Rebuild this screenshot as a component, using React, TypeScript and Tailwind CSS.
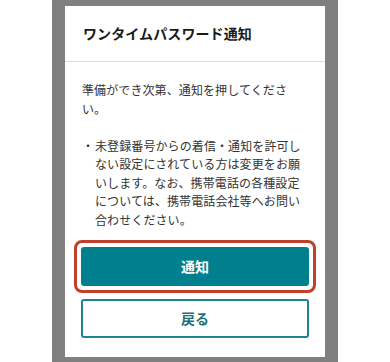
const font = {
  fontFamily: '"Noto Sans CJK JP", "Noto Sans", sans-serif',
};

export default function App() {
  return (
    <div className="flex h-[362px] w-[390px] justify-center overflow-hidden bg-white" style={font}>
      <div className="flex h-full w-[286px] flex-col bg-[#808080] px-[13px] pt-[6px]">
        <div className="flex h-[351px] flex-col bg-white">
          <div className="flex h-[56px] shrink-0 items-center border-b border-[#dcdcdc] px-[18px]">
            <h1 className="text-[14px] font-bold tracking-[0.1px] text-[#1a1a1a]">
              ワンタイムパスワード通知
            </h1>
          </div>
          <div className="px-[17px] pt-[19px] text-[12px] leading-[18.5px] tracking-[0.1px] text-[#333]">
            <p>準備ができ次第、通知を押してください。</p>
            <ul className="mt-[18.5px]">
              <li className="flex">
                <span className="w-[13px] shrink-0">・</span>
                <span>
                  未登録番号からの着信・通知を許可しない設定にされている方は変更をお願いします。なお、携帯電話の各種設定については、携帯電話会社等へお問い合わせください。
                </span>
              </li>
            </ul>
          </div>
          <div className="flex flex-col px-[16px] pt-[11px]">
            <div className="-mx-[7px] rounded-[8px] border-[3px] border-[#c0402b] p-[4px]">
              <button
                type="button"
                className="flex h-[39px] w-full items-center justify-center rounded-[3px] bg-[#00808f] text-[14px] font-bold text-white"
              >
                通知
              </button>
            </div>
            <button
              type="button"
              className="mt-[6px] flex h-[39px] w-full items-center justify-center rounded-[3px] border-2 border-[#1f8490] bg-white text-[14px] font-bold text-[#1a6f7a]"
            >
              戻る
            </button>
          </div>
        </div>
      </div>
    </div>
  );
}
